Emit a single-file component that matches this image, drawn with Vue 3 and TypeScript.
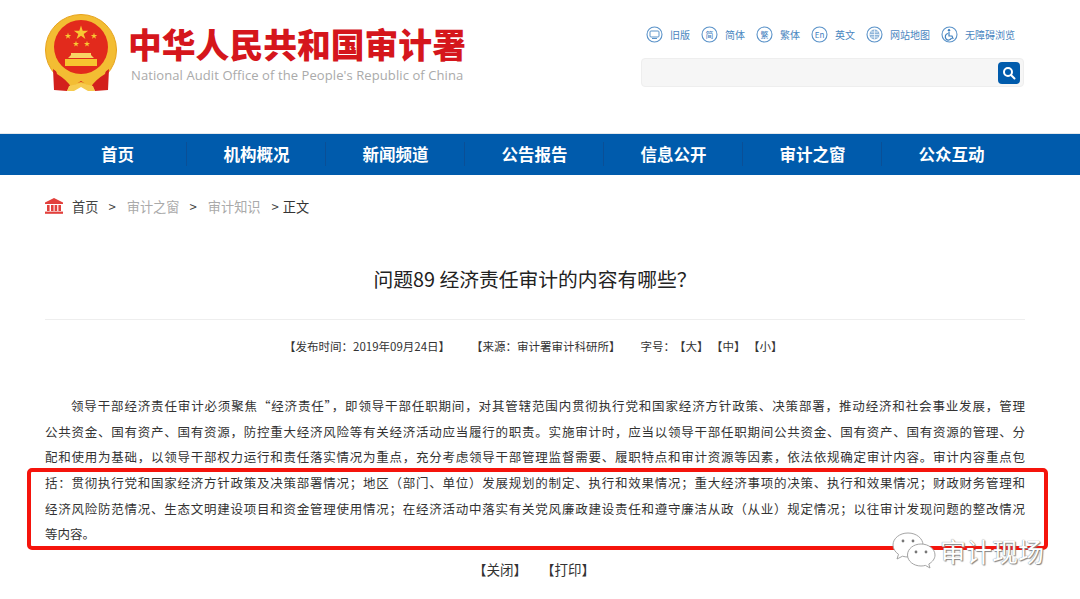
<script setup lang="ts">
const tools = [
  { label: '旧版', glyph: 'old' },
  { label: '简体', glyph: '简' },
  { label: '繁体', glyph: '繁' },
  { label: '英文', glyph: 'En' },
  { label: '网站地图', glyph: 'map' },
  { label: '无障碍浏览', glyph: 'access' },
]

const navItems = ['首页', '机构概况', '新闻频道', '公告报告', '信息公开', '审计之窗', '公众互动']

const lines = [
  '领导干部经济责任审计必须聚焦“经济责任”，即领导干部任职期间，对其管辖范围内贯彻执行党和国家经济方针政策、决策部署，推动经济和社会事业发展，管理',
  '公共资金、国有资产、国有资源，防控重大经济风险等有关经济活动应当履行的职责。实施审计时，应当以领导干部任职期间公共资金、国有资产、国有资源的管理、分',
  '配和使用为基础，以领导干部权力运行和责任落实情况为重点，充分考虑领导干部管理监督需要、履职特点和审计资源等因素，依法依规确定审计内容。审计内容重点包',
  '括：贯彻执行党和国家经济方针政策及决策部署情况；地区（部门、单位）发展规划的制定、执行和效果情况；重大经济事项的决策、执行和效果情况；财政财务管理和',
  '经济风险防范情况、生态文明建设项目和资金管理使用情况；在经济活动中落实有关党风廉政建设责任和遵守廉洁从政（从业）规定情况；以往审计发现问题的整改情况',
]

// five pointed star for the emblem
function star(cx: number, cy: number, r: number): string {
  const pts: string[] = []
  for (let i = 0; i < 10; i++) {
    const rad = i % 2 === 0 ? r : r * 0.38
    const a = (Math.PI / 5) * i - Math.PI / 2
    pts.push(`${(cx + rad * Math.cos(a)).toFixed(2)},${(cy + rad * Math.sin(a)).toFixed(2)}`)
  }
  return pts.join(' ')
}

const stars = [star(36, 19, 7.5), star(23, 22, 3.4), star(49, 22, 3.4), star(31, 30, 3.2), star(42, 30, 3.2)]
</script>

<template>
  <div class="page">
    <header class="header">
      <div class="brand">
        <svg class="emblem" width="74" height="78" viewBox="0 0 74 78">
          <circle cx="36" cy="36" r="35.500" fill="#f3bd33" stroke="#e6a21c" />
          <circle cx="36" cy="33" r="27" fill="#e22a1c" />
          <polygon v-for="(p, i) in stars" :key="i" :points="p" fill="#f8c733" />
          <path d="M26 39 h20 v2 l3 3 h-26 l3 -3 Z" fill="#f8d465" />
          <path d="M20 45 h32 v7 H20 Z" fill="#f7c52f" />
          <path d="M8 55 L9 76 L22 77 L26 70 L36 68 L46 70 L50 77 L63 76 L64 55 L52 64 H20 Z" fill="#d3201c" />
          <path d="M10 52 Q36 72 62 52 L60 60 Q50 66 46 73 L36 67 L26 73 Q22 66 12 60 Z" fill="#f3bd33" />
          <path d="M24 72 L36 69 L48 72 L50 77 H43 L36 73 L29 77 H22 Z" fill="#f6cb4f" />
        </svg>
        <div class="brand-text">
          <div class="brand-cn">中华人民共和国审计署</div>
          <div class="brand-en">National Audit Office of the People's Republic of China</div>
        </div>
      </div>
      <div class="side">
        <ul class="tools">
          <li v-for="t in tools" :key="t.label" class="tool">
            <svg width="17" height="17" viewBox="0 0 17 17" class="tool-icon">
              <circle cx="8.500" cy="8.500" r="7.500" fill="none" stroke="#5b93c9" stroke-width="1.100" />
              <template v-if="t.glyph === 'old'">
                <rect x="4" y="5" width="9" height="6" rx="1" fill="none" stroke="#5b93c9" />
                <path d="M6 12.500h5" stroke="#5b93c9" />
              </template>
              <template v-else-if="t.glyph === 'map'">
                <circle cx="8.500" cy="8.500" r="5" fill="#8fb5da" />
                <path d="M3.500 8.500h10M8.500 3.500v10M5 6h7M5 11h7" stroke="#fff" stroke-width=".7" />
              </template>
              <template v-else-if="t.glyph === 'access'">
                <circle cx="8" cy="4.200" r="1.200" fill="#3f80bf" />
                <path d="M8 6v4h3l1.200 3M7 7.500a3.300 3.300 0 1 0 3.600 4.600" fill="none" stroke="#3f80bf" stroke-width="1.200" />
              </template>
              <text v-else x="8.500" y="11.600" text-anchor="middle" class="tool-glyph">{{ t.glyph }}</text>
            </svg>
            <span>{{ t.label }}</span>
          </li>
        </ul>
        <div class="search">
          <button class="search-btn" title="搜索">
            <svg width="14" height="14" viewBox="0 0 14 14" fill="none" stroke="#fff" stroke-width="2">
              <circle cx="6" cy="6" r="4" />
              <path d="M9 9l3.500 3.500" stroke-linecap="round" />
            </svg>
          </button>
        </div>
      </div>
    </header>

    <nav class="nav">
      <a v-for="item in navItems" :key="item" class="nav-item">{{ item }}</a>
    </nav>

    <div class="crumbs">
      <svg width="18" height="16" viewBox="0 0 18 16" fill="#e2403c">
        <path d="M9 0 L18 4.500 V6 H0 V4.500 Z" />
        <rect x="2" y="7" width="2.600" height="6" />
        <rect x="6" y="7" width="2.600" height="6" />
        <rect x="9.600" y="7" width="2.600" height="6" />
        <rect x="13.400" y="7" width="2.600" height="6" />
        <rect x="0" y="13.600" width="18" height="2.200" />
      </svg>
      <span class="crumb-home">首页</span>
      <span class="sep">&gt;</span>
      <span class="crumb-muted">审计之窗</span>
      <span class="sep">&gt;</span>
      <span class="crumb-muted">审计知识</span>
      <span class="sep last">&gt;</span>
      <span class="crumb-cur">正文</span>
    </div>

    <main class="article">
      <h1 class="title">问题89 经济责任审计的内容有哪些？</h1>
      <div class="meta">
        <span class="meta-date">【发布时间：2019年09月24日】</span>
        <span class="meta-source">【来源：审计署审计科研所】</span>
        <span class="meta-size">字号：</span>
        <span class="meta-opt">【大】</span>
        <span class="meta-opt">【中】</span>
        <span class="meta-opt">【小】</span>
      </div>
      <div class="body">
        <p v-for="(l, i) in lines" :key="i" class="line" :class="{ first: i === 0 }">{{ l }}</p>
        <p class="line end">等内容。</p>
      </div>
      <div class="actions">
        <span>【关闭】</span>
        <span>【打印】</span>
      </div>
    </main>

    <div class="highlight"></div>
    <div class="watermark">
      <svg width="44" height="38" viewBox="0 0 44 38" fill="#fff" stroke="#9a9a9a" stroke-width=".9">
        <path d="M16 1C7.500 1 1 6.500 1 13c0 3.800 2.200 7 5.500 9.300L5 27l5.500-2.800c1.800.5 3.600.8 5.500.8 8.500 0 15-5.500 15-12S24.500 1 16 1Z" />
        <path d="M29 12c-7.500 0-13.500 4.900-13.500 11S21.500 34 29 34c1.500 0 3-.2 4.400-.6L38 36l-1.200-4c3.700-2.100 6.200-5.200 6.200-9 0-6.100-6.500-11-14-11Z" />
        <circle cx="11" cy="9" r="1.400" fill="#777" stroke="none" />
        <circle cx="21" cy="9" r="1.400" fill="#777" stroke="none" />
        <circle cx="24" cy="20" r="1.400" fill="#777" stroke="none" />
        <circle cx="34" cy="20" r="1.400" fill="#777" stroke="none" />
      </svg>
      <span class="wm-text">审计现场</span>
    </div>
  </div>
</template>

<style>
html,
body {
  margin: 0;
  background: #fff;
}
</style>

<style scoped>
.page {
  position: relative;
  width: 1080px;
  height: 599px;
  overflow: hidden;
  background: #fff;
  font-family: "Noto Sans CJK SC", "Noto Sans", sans-serif;
  color: #333;
}

.header {
  height: 134px;
  display: flex;
  justify-content: space-between;
  padding: 14px 56px 0 45px;
  box-sizing: border-box;
  border-bottom: 1px solid #e4e8ec;
}

.brand {
  display: flex;
  align-items: flex-start;
  gap: 9px;
}

.brand-text {
  padding-top: 5px;
}

.brand-cn {
  font-size: 33.800px;
  line-height: 50px;
  font-weight: 900;
  color: #d5161c;
  white-space: nowrap;
}

.brand-en {
  font-family: "Open Sans", sans-serif;
  font-size: 13px;
  line-height: 14px;
  letter-spacing: 0.09px;
  margin-top: -1px;
  padding-left: 3px;
  color: #aaa;
  white-space: nowrap;
}

.side {
  width: 383px;
  padding-top: 10px;
}

.tools {
  list-style: none;
  margin: 0;
  padding: 0 0 0 5px;
  height: 20px;
  display: flex;
  gap: 11px;
}

.tool {
  display: flex;
  align-items: center;
  gap: 7px;
  font-size: 10px;
  color: #4a86c0;
  white-space: nowrap;
}

.tool-icon {
  flex: none;
}

.tool-glyph {
  font-size: 8px;
  fill: #3f80bf;
}

.search {
  margin-top: 14px;
  height: 29px;
  box-sizing: border-box;
  background: #f6f6f6;
  border: 1px solid #eee;
  border-radius: 4px;
  display: flex;
  justify-content: flex-end;
  align-items: center;
  padding-right: 3px;
}

.search-btn {
  width: 22px;
  height: 22px;
  padding: 0;
  border: 0;
  border-radius: 4px;
  background: #005bac;
  display: flex;
  align-items: center;
  justify-content: center;
}

.nav {
  height: 41px;
  background: #005bac;
  display: flex;
  padding-left: 48px;
}

.nav-item {
  width: 139px;
  font-size: 16.500px;
  font-weight: 700;
  line-height: 41px;
  text-align: center;
  color: #fff;
  position: relative;
}

.nav-item:not(:last-child)::after {
  content: "";
  position: absolute;
  right: 0;
  top: 8px;
  height: 24px;
  width: 1px;
  background: #0a4f96;
}

.crumbs {
  height: 62px;
  padding-left: 45px;
  display: flex;
  align-items: center;
  font-size: 13.200px;
  white-space: nowrap;
}

.crumb-home {
  margin-left: 9px;
  color: #444;
}

.crumb-muted {
  color: #aaa;
}

.crumb-cur {
  color: #333;
  margin-left: 4px;
}

.sep {
  color: #444;
  margin: 0 11px 0 10px;
}

.sep.last {
  margin: 0 0 0 11px;
}

.article {
  padding: 0 55px 0 45px;
}

.title {
  margin: 0;
  height: 83px;
  box-sizing: border-box;
  padding-top: 27px;
  border-bottom: 1px solid #eee;
  font-size: 19.800px;
  line-height: 30px;
  font-weight: 400;
  text-align: center;
  color: #222;
}

.meta {
  height: 52px;
  display: flex;
  align-items: center;
  font-size: 11.500px;
  padding-left: 239px;
  color: #333;
  white-space: nowrap;
}

.meta-source {
  margin-left: 21px;
}

.meta-size {
  margin-left: 20px;
  margin-right: -1px;
}

.meta-opt {
  width: 37px;
}

.body {
  margin-top: 21px;
  font-size: 12.500px;
  color: #333;
}

.line {
  margin: 0;
  height: 25.700px;
  line-height: 25.700px;
  text-align: justify;
  text-align-last: justify;
  white-space: nowrap;
}

.line.first {
  text-indent: 26px;
}

.line.end {
  text-align-last: left;
}

.actions {
  margin-top: 12px;
  display: flex;
  gap: 14px;
  padding-left: 428px;
  font-size: 13.500px;
  line-height: 20px;
}

.highlight {
  position: absolute;
  left: 27px;
  top: 468px;
  width: 1021px;
  height: 82px;
  box-sizing: border-box;
  border: 4px solid #f5140c;
  border-radius: 5px;
}

.watermark {
  position: absolute;
  left: 892px;
  top: 532px;
  display: flex;
  align-items: center;
  gap: 4px;
}

.wm-text {
  font-size: 26px;
  line-height: 34px;
  color: #fff;
  text-shadow: 0 0 1px #666, 1px 1px 1px #888;
}
</style>
